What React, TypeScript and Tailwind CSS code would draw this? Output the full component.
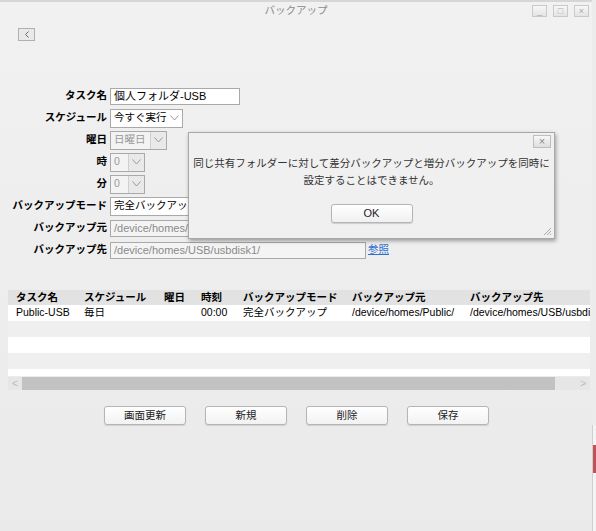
import React from 'react';

const jp = { fontFamily: '"Liberation Sans", "Noto Sans CJK JP", sans-serif' };

function Chevron() {
  return (
    <svg width="9" height="6" viewBox="0 0 9 6" className="ml-auto mr-[3px]">
      <path d="M0.5 0.5 L4.5 5 L8.5 0.5" fill="none" stroke="#9a9a9a" strokeWidth="1" />
    </svg>
  );
}

function Select({ value, w, disabled }: { value: string; w: string; disabled?: boolean }) {
  return (
    <div
      className={`flex items-center h-[19px] border border-[#a9a9a9] pl-[3px] text-[10.5px] whitespace-nowrap overflow-hidden ${w} ${
        disabled ? 'bg-[#f3f3f3] text-[#9a9a9a]' : 'bg-white text-black'
      }`}
    >
      <span>{value}</span>
      <div className={`flex items-center h-full ml-auto ${disabled ? 'border-l border-[#cfcfcf] bg-[#e9e9e9] pl-[3px]' : 'pl-[3px]'}`}>
        <Chevron />
      </div>
    </div>
  );
}

function Field({ value, w, disabled }: { value: string; w: string; disabled?: boolean }) {
  return (
    <div
      className={`flex items-center h-[17px] border border-[#a9a9a9] px-[3px] text-[11px] overflow-hidden whitespace-nowrap ${w} ${
        disabled ? 'bg-[#f4f4f4] text-[#8a8a8a]' : 'bg-white text-black'
      }`}
    >
      {value}
    </div>
  );
}

const cols = [
  { w: 'w-[68px]', h: 'タスク名', v: 'Public-USB' },
  { w: 'w-[80px]', h: 'スケジュール', v: '毎日' },
  { w: 'w-[37px]', h: '曜日', v: '' },
  { w: 'w-[42px]', h: '時刻', v: '00:00' },
  { w: 'w-[109px]', h: 'バックアップモード', v: '完全バックアップ' },
  { w: 'w-[118px]', h: 'バックアップ元', v: '/device/homes/Public/' },
  { w: 'w-[160px]', h: 'バックアップ先', v: '/device/homes/USB/usbdisk1/' },
];

function Btn({ label }: { label: string }) {
  return (
    <button className="w-[82px] h-[19px] rounded-[3px] border border-[#b5b5b5] bg-gradient-to-b from-white to-[#f2f2f2] shadow-[0_1px_1px_rgba(0,0,0,0.12)] text-[10.5px] text-[#222]">
      {label}
    </button>
  );
}

const label = 'text-right font-bold text-[10.5px] whitespace-nowrap';

export default function App() {
  return (
    <div className="w-[596px] h-[531px] flex bg-[#ececec] overflow-hidden" style={jp}>
      <div className="relative w-[592px] h-full flex flex-col bg-gradient-to-b from-[#f1f1f1] to-[#eaeaea] border-t-2 border-[#d6d6d6]">
        {/* title bar */}
        <div className="relative h-[18px] flex items-center justify-center">
          <span className="text-[10.5px] text-[#8c8c8c]">バックアップ</span>
          <div className="absolute right-[3px] top-[3px] flex gap-[6px]">
            {['_', '□', '×'].map((c) => (
              <div
                key={c}
                className="w-[15px] h-[12px] border border-[#c9c9c9] bg-gradient-to-b from-[#f7f7f7] to-[#e4e4e4] text-[9px] leading-[10px] text-[#aaa] flex items-center justify-center"
              >
                {c}
              </div>
            ))}
          </div>
        </div>

        {/* back */}
        <div className="pl-[18px] pt-[8px]">
          <div className="w-[17px] h-[13px] border border-[#b0b0b0] bg-[#e9e9e9] flex items-center justify-center">
            <svg width="6" height="7" viewBox="0 0 6 7">
              <path d="M4.5 0.5 L1.5 3.5 L4.5 6.5" fill="none" stroke="#666" strokeWidth="1" />
            </svg>
          </div>
        </div>

        {/* form */}
        <div className="mt-[44px] grid grid-cols-[107px_1fr] gap-x-[3px] auto-rows-[22px] items-center">
          <span className={label}>タスク名</span>
          <Field value="個人フォルダ-USB" w="w-[130px]" />
          <span className={label}>スケジュール</span>
          <Select value="今すぐ実行" w="w-[73px]" />
          <span className={label}>曜日</span>
          <Select value="日曜日" w="w-[57px]" disabled />
          <span className={label}>時</span>
          <Select value="0" w="w-[35px]" disabled />
          <span className={label}>分</span>
          <Select value="0" w="w-[35px]" disabled />
          <span className={label}>バックアップモード</span>
          <Select value="完全バックアップ" w="w-[110px]" />
          <span className={label}>バックアップ元</span>
          <Field value="/device/homes/Public/" w="w-[256px]" disabled />
          <span className={label}>バックアップ先</span>
          <div className="flex items-center gap-[2px]">
            <Field value="/device/homes/USB/usbdisk1/" w="w-[256px]" disabled />
            <a className="text-[10.5px] text-[#2f6fd0] underline">参照</a>
          </div>
        </div>

        {/* table */}
        <div className="mt-[29px] ml-[8px] w-[582px] overflow-hidden">
          <div className="flex h-[15px] items-center bg-[#e2e2e2] font-bold text-[10.5px] whitespace-nowrap">
            {cols.map((c) => (
              <div key={c.h} className={`${c.w} shrink-0 pl-[8px]`}>
                {c.h}
              </div>
            ))}
          </div>
          <div className="flex h-[16px] items-center bg-white text-[10.5px] whitespace-nowrap">
            {cols.map((c) => (
              <div key={c.h} className={`${c.w} shrink-0 pl-[8px] overflow-hidden`}>
                {c.v}
              </div>
            ))}
          </div>
          <div className="h-[16px] bg-[#efefef]" />
          <div className="h-[16px] bg-white" />
          <div className="h-[16px] bg-[#efefef]" />
          <div className="h-[7px] bg-white" />
          <div className="mt-[1px] h-[13px] flex items-center bg-[#e6e6e6]">
            <span className="w-[14px] text-center text-[10px] text-[#bbb]">&lt;</span>
            <div className="h-full w-[533px] bg-[#c2c2c2]" />
            <span className="ml-auto mr-[4px] text-[10px] text-[#bbb]">&gt;</span>
          </div>
        </div>

        {/* buttons */}
        <div className="mt-[16px] ml-[104px] flex gap-[19px]">
          <Btn label="画面更新" />
          <Btn label="新規" />
          <Btn label="削除" />
          <Btn label="保存" />
        </div>

        {/* dialog */}
        <div className="absolute left-[188px] top-[130px] w-[367px] h-[107px] bg-[#f0f0f0] border border-[#a8a8a8] shadow-[1px_2px_4px_rgba(0,0,0,0.35)] flex flex-col items-center">
          <div className="self-end mt-[2px] mr-[3px] w-[18px] h-[13px] border border-[#bdbdbd] bg-gradient-to-b from-[#f7f7f7] to-[#dedede] flex items-center justify-center text-[11px] leading-none text-[#888]">
            ×
          </div>
          <p className="mt-[7px] text-[10.5px] leading-[17px] text-[#333] text-center whitespace-nowrap">
            同じ共有フォルダーに対して差分バックアップと増分バックアップを同時に
            <br />
            設定することはできません。
          </p>
          <button className="mt-[15px] w-[82px] h-[19px] rounded-[3px] border border-[#b5b5b5] bg-gradient-to-b from-white to-[#f0f0f0] shadow-[0_1px_1px_rgba(0,0,0,0.15)] text-[11px] text-[#222]">
            OK
          </button>
          <svg width="10" height="10" viewBox="0 0 10 10" className="absolute right-[2px] bottom-[2px]">
            <path d="M9 2 L2 9 M9 5 L5 9 M9 8 L8 9" stroke="#aaa" strokeWidth="1" />
          </svg>
        </div>
      </div>

      {/* right edge */}
      <div className="w-[4px] h-full flex flex-col bg-[#ececec]">
        <div className="mt-[425px] flex-1 border-l border-[#cfcfcf] bg-[#f4f4f4]">
          <div className="mt-[20px] h-[28px] bg-[#c2525a]" />
        </div>
      </div>
    </div>
  );
}
